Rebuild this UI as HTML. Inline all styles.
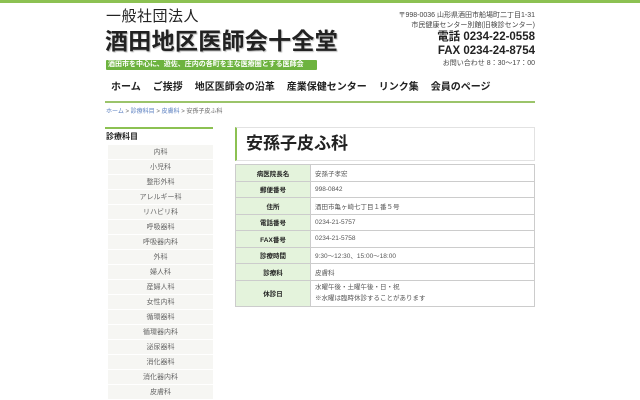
<!DOCTYPE html>
<html><head><meta charset="utf-8"><style>
*{margin:0;padding:0;box-sizing:border-box}
body{width:640px;height:400px;overflow:hidden;background:#fff;font-family:"Liberation Sans","Noto Sans CJK JP",sans-serif;color:#333;position:relative}
.topbar{position:absolute;left:0;top:0;width:640px;height:3px;background:#8cc152}
.a{position:absolute;line-height:1.1}
.t1{left:106px;top:9px;font-size:15px;color:#222;letter-spacing:0.5px}
.t2{left:105px;top:29px;font-size:23px;font-weight:bold;color:#222;letter-spacing:0.3px;text-shadow:1px 1px 1px #bbb}
.tag{left:106px;top:60px;width:211px;height:10px;background:#6db33f;color:#fff;font-size:7px;line-height:10px;font-weight:bold;white-space:nowrap;overflow:hidden;padding-left:2px;border-radius:1px}
.r{right:105px;text-align:right;white-space:nowrap;color:#444}
.nav{left:111px;top:82px;font-size:10px;font-weight:bold;color:#222}
.nav span{margin-right:12px}
.line{left:105px;top:101px;width:430px;height:2px;background:#9bc46a}
.bc{left:106px;top:109px;font-size:6px;color:#666}
.bc b{color:#5a7fc0;font-weight:normal}
.side{left:105px;top:127px;width:108px;border-top:2px solid #8cc152}
.side h3{font-size:8px;font-weight:bold;color:#222;height:16px;line-height:16px;padding-left:1px}
.side div{height:15px;line-height:15px;font-size:7px;text-align:center;color:#666;background:#f6f6f3;border-bottom:1px solid #fff;margin-left:3px}
.ttl{left:235px;top:127px;width:300px;height:34px;border:1px solid #e2e2e2;border-left:2px solid #8cc152;font-size:17px;font-weight:bold;color:#222;line-height:32px;padding-left:9px}
table{position:absolute;left:235px;top:164px;width:300px;border-collapse:collapse;font-size:6.5px}
td{border:1px solid #ccc;height:16.5px;padding-left:4px;color:#555}
td.l{background:#e4f3dc;width:75px;text-align:center;font-weight:bold;color:#222;padding:0}
</style></head><body>
<div class="topbar"></div>
<div class="a t1">一般社団法人</div>
<div class="a t2">酒田地区医師会十全堂</div>
<div class="a tag">酒田市を中心に、遊佐、庄内の各町を主な医療圏とする医師会</div>
<div class="a r" style="top:12px;font-size:7px">〒998-0036 山形県酒田市船場町二丁目1-31</div>
<div class="a r" style="top:22px;font-size:7px">市民健康センター別館(旧検診センター)</div>
<div class="a r" style="top:31px;font-size:11.5px;font-weight:bold;color:#222">電話 0234-22-0558</div>
<div class="a r" style="top:45px;font-size:11.5px;font-weight:bold;color:#222">FAX 0234-24-8754</div>
<div class="a r" style="top:60px;font-size:7px">お問い合わせ 8：30〜17：00</div>
<div class="a nav"><span>ホーム</span><span>ご挨拶</span><span>地区医師会の沿革</span><span>産業保健センター</span><span>リンク集</span><span>会員のページ</span></div>
<div class="a line"></div>
<div class="a bc"><b>ホーム</b> &gt; <b>診療科目</b> &gt; <b>皮膚科</b> &gt; 安孫子皮ふ科</div>
<div class="a side"><h3>診療科目</h3>
<div>内科</div><div>小児科</div><div>整形外科</div><div>アレルギー科</div><div>リハビリ科</div><div>呼吸器科</div><div>呼吸器内科</div><div>外科</div><div>婦人科</div><div>産婦人科</div><div>女性内科</div><div>循環器科</div><div>循環器内科</div><div>泌尿器科</div><div>消化器科</div><div>消化器内科</div><div>皮膚科</div></div>
<div class="a ttl">安孫子皮ふ科</div>
<table>
<tr><td class="l">病医院長名</td><td>安孫子孝宏</td></tr>
<tr><td class="l">郵便番号</td><td>998-0842</td></tr>
<tr><td class="l">住所</td><td>酒田市亀ヶ崎七丁目１番５号</td></tr>
<tr><td class="l">電話番号</td><td>0234-21-5757</td></tr>
<tr><td class="l">FAX番号</td><td>0234-21-5758</td></tr>
<tr><td class="l">診療時間</td><td>9:30〜12:30、15:00〜18:00</td></tr>
<tr><td class="l">診療科</td><td>皮膚科</td></tr>
<tr><td class="l" style="height:26px">休診日</td><td style="line-height:11px">水曜午後・土曜午後・日・祝<br>※水曜は臨時休診することがあります</td></tr>
</table>
</body></html>
